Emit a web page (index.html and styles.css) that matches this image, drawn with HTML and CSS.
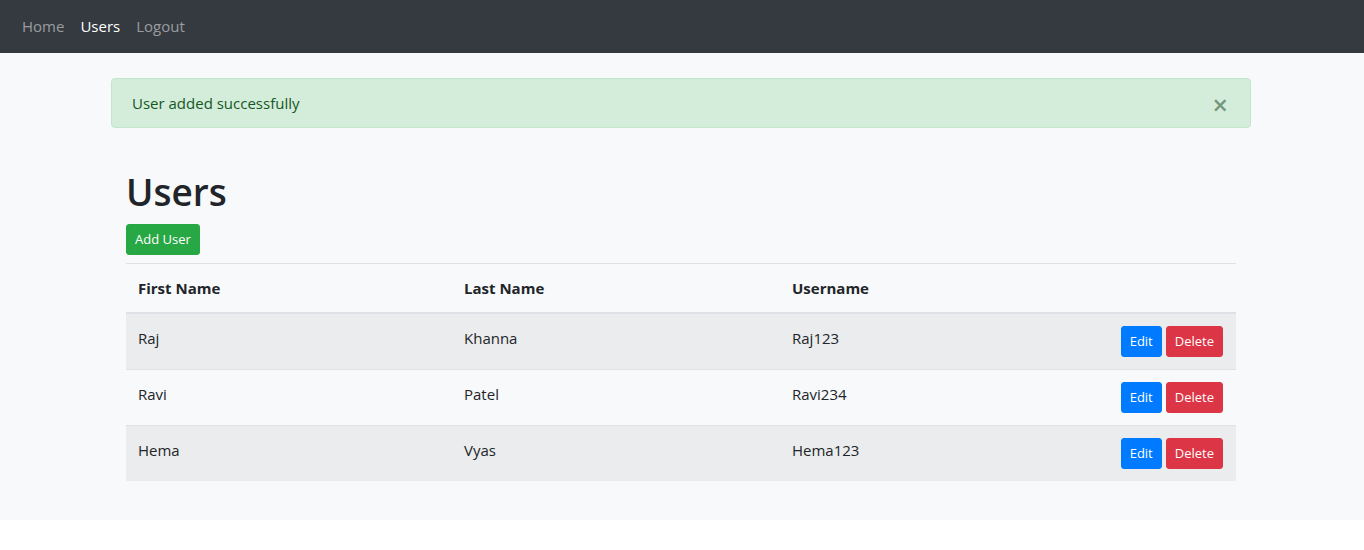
FILE: index.html
```html
<!DOCTYPE html>
<html>
<head>
<meta charset="utf-8">
<link rel="stylesheet" href="styles.css">
</head>
<body>
<nav class="navbar">
  <a class="nav-link" href="#">Home</a>
  <a class="nav-link active" href="#">Users</a>
  <a class="nav-link" href="#">Logout</a>
</nav>
<main class="page">
  <div class="container">
    <div class="alert">
      <span>User added successfully</span>
      <button class="close" type="button">&times;</button>
    </div>
    <div class="content">
      <h1 class="title">Users</h1>
      <button class="btn btn-sm btn-success" type="button">Add User</button>
      <table class="table">
        <thead>
          <tr>
            <th class="c1">First Name</th>
            <th class="c2">Last Name</th>
            <th class="c3">Username</th>
            <th class="c4"></th>
          </tr>
        </thead>
        <tbody>
          <tr>
            <td>Raj</td><td>Khanna</td><td>Raj123</td>
            <td class="actions"><button class="btn btn-sm btn-primary">Edit</button><button class="btn btn-sm btn-danger">Delete</button></td>
          </tr>
          <tr>
            <td>Ravi</td><td>Patel</td><td>Ravi234</td>
            <td class="actions"><button class="btn btn-sm btn-primary">Edit</button><button class="btn btn-sm btn-danger">Delete</button></td>
          </tr>
          <tr>
            <td>Hema</td><td>Vyas</td><td>Hema123</td>
            <td class="actions"><button class="btn btn-sm btn-primary">Edit</button><button class="btn btn-sm btn-danger">Delete</button></td>
          </tr>
        </tbody>
      </table>
    </div>
  </div>
</main>
</body>
</html>
```
FILE: styles.css
```css
* { box-sizing: border-box; }
html, body { margin: 0; padding: 0; background: #fff; }
body {
  font-family: "Open Sans", "Noto Sans", sans-serif;
  font-size: 15px;
  line-height: 24px;
  color: #212529;
}
.navbar {
  background: #343a40;
  height: 53px;
  display: flex;
  align-items: center;
  padding: 0 14px 2px;
}
.nav-link {
  color: rgba(255,255,255,.5);
  text-decoration: none;
  padding: 8px 8px;
  font-size: 15px;
  line-height: 24px;
}
.nav-link.active { color: #fff; }
.page {
  background: #f8f9fa;
  padding: 25px 2px 39px 0;
}
.container {
  width: 1140px;
  margin: 0 auto;
}
.alert {
  position: relative;
  background: #d4edda;
  border: 1px solid #c3e6cb;
  color: #155724;
  border-radius: 4px;
  padding: 12px 20px;
  height: 50px;
  line-height: 24px;
  display: flex;
  align-items: center;
}
.close {
  position: absolute;
  right: 0;
  top: 0;
  padding: 14px 22px 12px;
  background: none;
  border: 0;
  font-size: 27px;
  font-weight: 600;
  line-height: 24px;
  color: #76977e;
  font-family: "Open Sans", sans-serif;
}
.content {
  padding: 0 15px;
  margin-top: 40px;
}
.title {
  font-size: 37px;
  font-weight: 600;
  line-height: 48px;
  margin: 0 0 8px;
}
.btn {
  display: inline-block;
  border: 1px solid transparent;
  color: #fff;
  font-family: inherit;
  cursor: pointer;
}
.btn-sm {
  font-size: 13px;
  line-height: 21px;
  padding: 4px 8px;
  border-radius: 3px;
}
.btn-success { background: #28a745; border-color: #28a745; }
.btn-primary { background: #007bff; border-color: #007bff; }
.btn-danger { background: #dc3545; border-color: #dc3545; }
.table {
  width: 100%;
  border-collapse: collapse;
  margin-top: 8px;
}
.table th, .table td {
  padding: 12px;
  text-align: left;
  vertical-align: top;
  border-top: 1px solid #dee2e6;
}
.table thead th {
  border-bottom: 2px solid #dee2e6;
  font-weight: 700;
}
.table tbody tr:nth-child(odd) { background: rgba(0,0,0,.05); }
.c1 { width: 326px; }
.c2 { width: 328px; }
.c3 { width: 230px; }
.table td.actions { text-align: right; padding: 12px 13px 12px 12px; }
.actions .btn + .btn { margin-left: 4px; }
```
